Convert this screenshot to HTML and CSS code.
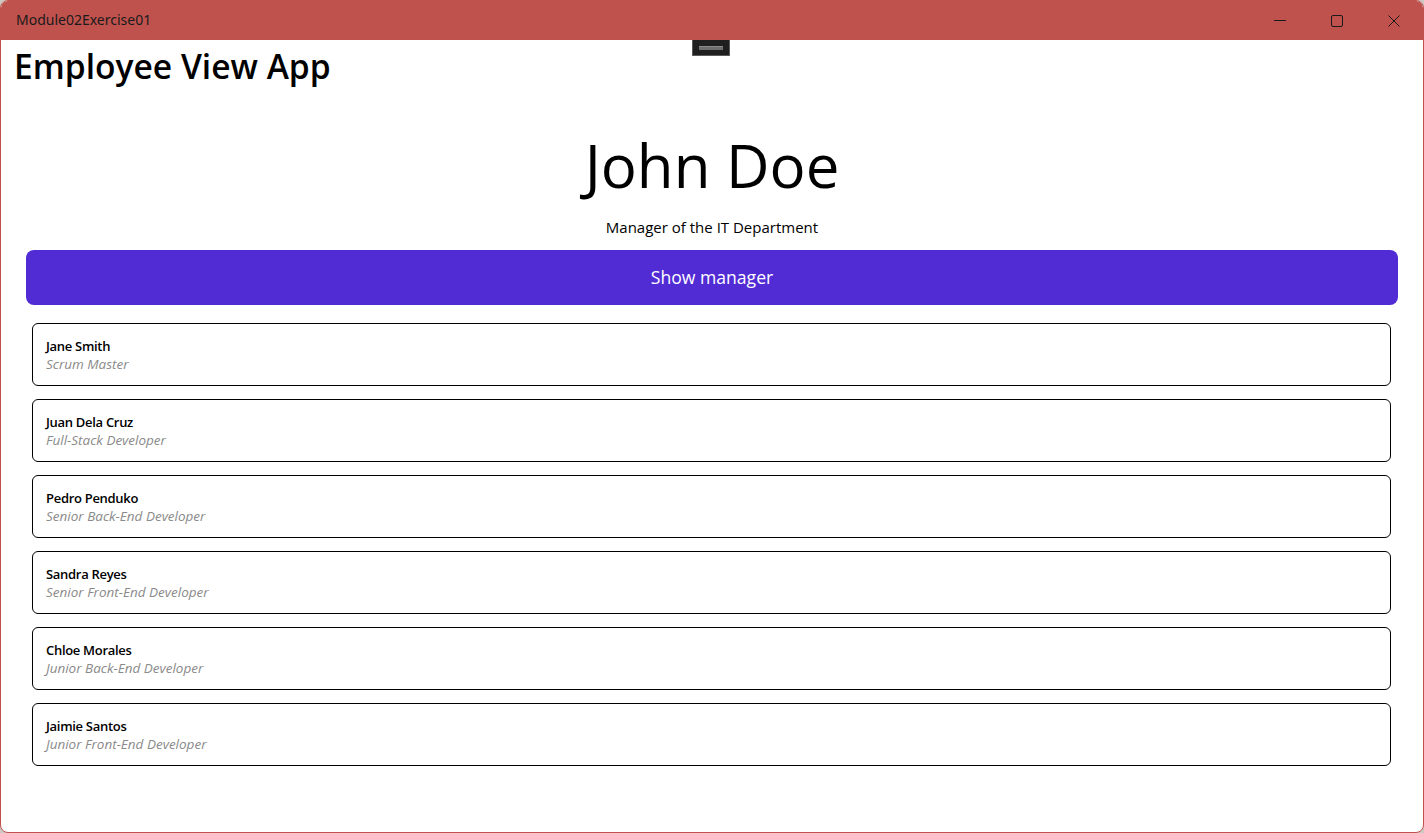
FILE: index.html
```html
<!DOCTYPE html>
<html>
<head>
<meta charset="utf-8">
<title>Module02Exercise01</title>
<link rel="stylesheet" href="styles.css">
</head>
<body>
<div class="window">
  <div class="titlebar">
    <span class="title">Module02Exercise01</span>
    <div class="controls">
      <span class="ctl"><svg width="12" height="12" viewBox="0 0 12 12"><line x1="0" y1="5.5" x2="12" y2="5.5" stroke="#1a1a1a" stroke-width="1"/></svg></span>
      <span class="ctl"><svg width="12" height="12" viewBox="0 0 12 12"><rect x="0.5" y="0.5" width="11" height="11" rx="1.5" fill="none" stroke="#1a1a1a" stroke-width="1"/></svg></span>
      <span class="ctl"><svg width="12" height="12" viewBox="0 0 12 12"><path d="M0.5 0.5 L11.5 11.5 M11.5 0.5 L0.5 11.5" stroke="#1a1a1a" stroke-width="1"/></svg></span>
    </div>
  </div>
  <div class="handle"><span class="grip"></span></div>
  <div class="content">
    <h1 class="app-title">Employee View App</h1>
    <h2 class="name">John Doe</h2>
    <p class="position">Manager of the IT Department</p>
    <button class="show-btn">Show manager</button>
    <ul class="list">
      <li class="item"><span class="emp">Jane Smith</span><span class="role">Scrum Master</span></li>
      <li class="item"><span class="emp">Juan Dela Cruz</span><span class="role">Full-Stack Developer</span></li>
      <li class="item"><span class="emp">Pedro Penduko</span><span class="role">Senior Back-End Developer</span></li>
      <li class="item"><span class="emp">Sandra Reyes</span><span class="role">Senior Front-End Developer</span></li>
      <li class="item"><span class="emp">Chloe Morales</span><span class="role">Junior Back-End Developer</span></li>
      <li class="item"><span class="emp">Jaimie Santos</span><span class="role">Junior Front-End Developer</span></li>
    </ul>
  </div>
</div>
</body>
</html>
```

FILE: styles.css
```css
html, body {
  margin: 0;
  padding: 0;
  width: 1424px;
  height: 833px;
  overflow: hidden;
  background: #cdc8c2;
  font-family: "Open Sans", "Noto Sans", sans-serif;
  color: #000;
}

.window {
  position: relative;
  box-sizing: border-box;
  width: 1424px;
  height: 833px;
  border: 1px solid #c0524e;
  border-radius: 8px;
  background: #fff;
  overflow: hidden;
  display: flex;
  flex-direction: column;
}

.titlebar {
  height: 39px;
  flex: none;
  background: #c0524e;
  display: flex;
  align-items: center;
  justify-content: space-between;
}

.title {
  font-family: "Noto Sans", "Open Sans", sans-serif;
  font-size: 14px;
  color: #1a1a1a;
  padding-left: 15px;
  padding-bottom: 2px;
}

.controls {
  display: flex;
  height: 100%;
}

.ctl {
  width: 57px;
  display: flex;
  align-items: center;
  justify-content: center;
}

.ctl:last-child {
  width: 58px;
}

.handle {
  position: absolute;
  left: 691px;
  top: 39px;
  width: 36px;
  height: 15px;
  background: #1f1f1f;
  border: 1px solid #5a5a5a;
  border-top: none;
  display: flex;
  align-items: center;
  justify-content: center;
}

.grip {
  display: block;
  width: 24px;
  height: 3px;
  background: #6e6e6e;
  border-top: 1px solid #8a8a8a;
}

.content {
  flex: 1;
  display: flex;
  flex-direction: column;
}

.app-title {
  margin: 0;
  padding: 4px 0 0 13px;
  font-size: 33.6px;
  font-weight: 600;
  line-height: 44px;
  color: #000;
}

.name {
  margin: 36px 0 0;
  text-align: center;
  font-size: 60px;
  font-weight: 400;
  line-height: 82px;
}

.position {
  margin: 11px 0 0;
  text-align: center;
  font-size: 15px;
  line-height: 20px;
}

.show-btn {
  margin: 13px 25px 0 25px;
  height: 55px;
  flex: none;
  border: none;
  border-radius: 8px;
  background: #512bd4;
  color: #fff;
  font-family: "Open Sans", "Noto Sans", sans-serif;
  font-size: 17.6px;
  padding: 0 0 2px;
}

.list {
  list-style: none;
  margin: 18px 32px 0 31px;
  padding: 0;
  display: flex;
  flex-direction: column;
  gap: 13px;
}

.item {
  box-sizing: border-box;
  height: 63px;
  border: 1px solid #000;
  border-radius: 6px;
  padding: 13px 13px 0;
  display: flex;
  flex-direction: column;
}

.emp {
  font-size: 13px;
  font-weight: 600;
  line-height: 18px;
  letter-spacing: -0.3px;
}

.role {
  font-size: 13.5px;
  font-style: italic;
  line-height: 18px;
  color: #8a8a8a;
}
```
